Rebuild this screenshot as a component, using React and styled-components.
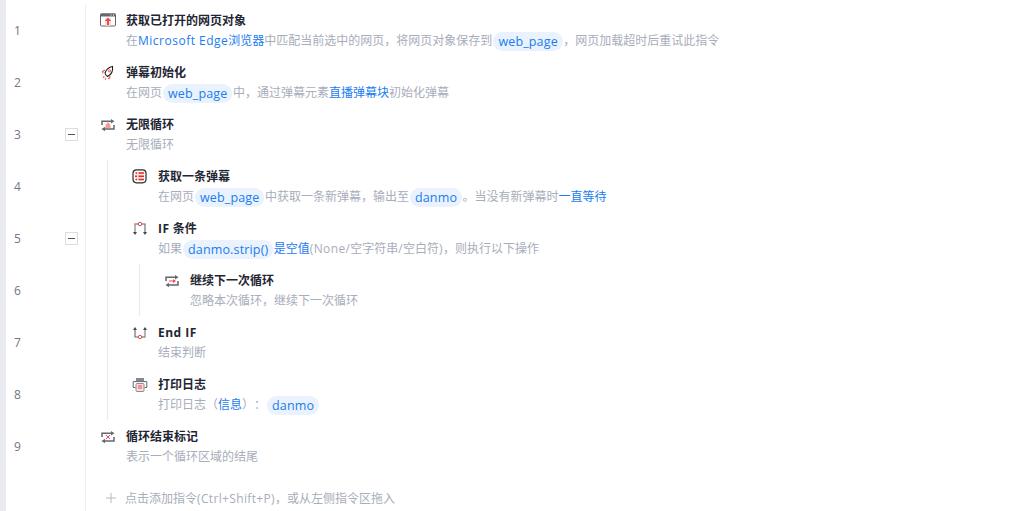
import React from 'react';
import styled, { createGlobalStyle } from 'styled-components';

const GlobalStyle = createGlobalStyle`
  html, body {
    margin: 0;
    padding: 0;
    height: 100%;
    overflow: hidden;
    background: #fff;
  }
  #root {
    height: 100%;
  }
`;

const FONT = `'Open Sans', 'Noto Sans CJK SC', sans-serif`;

const Page = styled.div`
  display: flex;
  height: 511px;
  overflow: hidden;
  font-family: ${FONT};
  font-size: 12px;
  text-spacing-trim: space-all;
`;

const Strip = styled.div`
  width: 6px;
  flex: none;
  background: #e9ebf1;
`;

const Gutter = styled.div`
  width: 79px;
  flex: none;
  padding-top: 4px;
  box-sizing: border-box;
`;

const GutterRow = styled.div`
  height: 52px;
  display: flex;
  align-items: center;
  justify-content: space-between;
  padding: 0 7px 0 8px;
  color: #73777f;
`;

const Toggle = styled.span`
  width: 13px;
  height: 13px;
  box-sizing: border-box;
  border: 1px solid #dcdcdc;
  display: flex;
  align-items: center;
  justify-content: center;
  &::before {
    content: '';
    width: 7px;
    height: 1px;
    background: #555;
  }
`;

const Flow = styled.div`
  flex: 1;
  margin-top: 4px;
  border-left: 1px solid #eeeff2;
`;

const Block = styled.div`
  margin-left: 21px;
  border-left: 1px solid #e8e9ed;
  padding-left: 10px;
`;

const Row = styled.div`
  height: 52px;
  box-sizing: border-box;
  display: flex;
  gap: 10px;
  padding: 7px 0 0 14px;
`;

const IconBox = styled.span`
  width: 16px;
  height: 20px;
  flex: none;
  display: flex;
  align-items: center;
  justify-content: center;
`;

const Body = styled.div`
  display: flex;
  flex-direction: column;
  white-space: nowrap;
`;

const Title = styled.div`
  height: 20px;
  line-height: 20px;
  font-weight: 700;
  color: #1f2633;
`;

const Desc = styled.div`
  height: 20px;
  line-height: 20px;
  display: flex;
  align-items: center;
  color: #a8adba;
`;

const Latin = styled.span`
  letter-spacing: ${(p) => (p.$tight ? '0.35px' : '0.5px')};
`;

const Link = styled.span`
  color: #1a7cf0;
`;

const Chip = styled.span`
  height: 19px;
  line-height: 19px;
  padding: 0 5px;
  margin: 0 0.5px 0 1px;
  border-radius: 10px;
  background: #e9f2fd;
  color: #1a7cf0;
  font-size: 12.5px;
  letter-spacing: 0.15px;
`;

const Footer = styled.div`
  display: flex;
  align-items: center;
  gap: 9px;
  padding: 16px 0 0 20px;
  height: 20px;
  color: #a8adba;
`;

const Svg = ({ children }) => (
  <svg width="16" height="16" viewBox="0 0 16 16" fill="none">
    {children}
  </svg>
);

const GRAY = '#63666d';
const RED = '#ee4b4b';
const PINK = '#fbdcdc';

const WindowIcon = () => (
  <Svg>
    <rect x="0.5" y="1" width="15" height="12" rx="1" stroke={GRAY} />
    <rect x="0.5" y="0.5" width="15" height="3" fill={GRAY} />
    <path d="M10.5 2h1M13 2h1" stroke="#fff" />
    <rect x="5" y="5" width="6" height="7.5" fill={PINK} />
    <path d="M8 4.5 4.8 8H7v4h2V8h2.2z" fill={RED} />
  </Svg>
);

const RocketIcon = () => (
  <Svg>
    <path d="M12.5 1.5C9 2.2 6.2 4.6 5 8c.3 1.5 1.2 2.8 2.5 3.5 3.4-1.6 5.6-5.4 5-10z" stroke="#1f1f1f" strokeWidth="1.1" />
    <circle cx="9.5" cy="5.8" r="1.1" stroke={RED} />
    <path d="M4.8 5 2.5 6.5l.5 1.8M10 11l-.3 2-1.7.7" stroke={RED} strokeWidth="1.1" />
    <path d="M3 12.5l1.5-1M5 14.5l1-1" stroke={RED} strokeWidth="1.2" />
  </Svg>
);

const LoopIcon = ({ children }) => (
  <Svg>
    <path d="M2 8V4.2h9.5" stroke={GRAY} strokeWidth="1.5" />
    <path d="M11 2 14.5 4.2 11 6.5z" fill={GRAY} />
    <path d="M14 8v4h-9.5" stroke={GRAY} strokeWidth="1.5" />
    <path d="M5 9.8 1.5 12 5 14.2z" fill={GRAY} />
    {children}
  </Svg>
);

const ListIcon = () => (
  <Svg>
    <rect x="1" y="0.8" width="13" height="13" rx="3.5" stroke="#2b2b2b" strokeWidth="1.2" />
    <rect x="3.5" y="3" width="8" height="8.5" rx="1" fill={PINK} />
    <path d="M6.5 4h5.5M6.5 7.2h5.5M6.5 10.4h5.5" stroke="#d92f23" strokeWidth="1.5" />
    <path d="M3.5 4h1.5M3.5 10.4h1.5M3 7.2h2" stroke="#d92f23" strokeWidth="1.5" />
  </Svg>
);

const IfIcon = () => (
  <Svg>
    <path d="M3 12V3h3" stroke="#8b8e94" strokeWidth="1.3" />
    <path d="M10 3h3v9" stroke={GRAY} strokeWidth="1.1" />
    <path d="M1 11h4l-2 3zM11 11h4l-2 3z" fill="#44474d" />
    <circle cx="8" cy="3" r="1.7" stroke={RED} />
  </Svg>
);

const EndIfIcon = () => (
  <Svg>
    <path d="M3 4v8h3" stroke={GRAY} strokeWidth="1.1" />
    <path d="M13 4v8h-3" stroke="#8b8e94" strokeWidth="1.3" />
    <path d="M1 5h4L3 2zM11 5h4l-2-3z" fill="#44474d" />
    <circle cx="8" cy="12" r="1.7" stroke={RED} />
  </Svg>
);

const PrintIcon = () => (
  <Svg>
    <path d="M4 1h8v3H4z" fill="#85888e" />
    <path d="M3.5 10.5H1.2V4.6h13.6v5.9h-2.3" stroke={GRAY} />
    <rect x="4" y="6.5" width="8" height="8" rx="1" fill={PINK} stroke="#8b8e94" />
    <path d="M6 9h4M6 11h4" stroke={RED} />
  </Svg>
);

const PlusIcon = () => (
  <svg width="10" height="10" viewBox="0 0 10 10" fill="none">
    <path d="M5 0v10M0 5h10" stroke="#b4b8c2" />
  </svg>
);

const Step = ({ icon, title, children }) => (
  <Row>
    <IconBox>{icon}</IconBox>
    <Body>
      <Title>{title}</Title>
      <Desc>{children}</Desc>
    </Body>
  </Row>
);

const LINES = [1, 2, 3, 4, 5, 6, 7, 8, 9];
const FOLDABLE = [3, 5];

export default function App() {
  return (
    <>
      <GlobalStyle />
      <Page>
        <Strip />
        <Gutter>
          {LINES.map((n) => (
            <GutterRow key={n}>
              <span>{n}</span>
              {FOLDABLE.includes(n) && <Toggle />}
            </GutterRow>
          ))}
        </Gutter>
        <Flow>
          <Step icon={<WindowIcon />} title="获取已打开的网页对象">
            在<Link><Latin>Microsoft Edge</Latin>浏览器</Link>中匹配当前选中的网页，将网页对象保存到<Chip>web_page</Chip>，网页加载超时后重试此指令
          </Step>
          <Step icon={<RocketIcon />} title="弹幕初始化">
            在网页<Chip>web_page</Chip>中，通过弹幕元素<Link>直播弹幕块</Link>初始化弹幕
          </Step>
          <Step
            icon={
              <LoopIcon>
                <path d="M8 5 5.5 8v3h5V8z" fill="#f59a94" />
              </LoopIcon>
            }
            title="无限循环"
          >
            无限循环
          </Step>
          <Block>
            <Step icon={<ListIcon />} title="获取一条弹幕">
              在网页<Chip>web_page</Chip>中获取一条新弹幕，输出至<Chip>danmo</Chip>。当没有新弹幕时<Link>一直等待</Link>
            </Step>
            <Step icon={<IfIcon />} title={<><Latin>IF</Latin> 条件</>}>
              如果<Chip>danmo.strip()</Chip><Link>是空值</Link><Latin $tight>(None/</Latin>空字符串<Latin $tight>/</Latin>空白符<Latin $tight>)</Latin>，则执行以下操作
            </Step>
            <Block>
              <Step
                icon={
                  <LoopIcon>
                    <path d="M5 8h5" stroke={RED} />
                    <path d="M9 6l3 2-3 2z" fill={RED} />
                  </LoopIcon>
                }
                title="继续下一次循环"
              >
                忽略本次循环，继续下一次循环
              </Step>
            </Block>
            <Step icon={<EndIfIcon />} title={<Latin>End IF</Latin>}>
              结束判断
            </Step>
            <Step icon={<PrintIcon />} title="打印日志">
              打印日志（<Link>信息</Link>）：<Chip>danmo</Chip>
            </Step>
          </Block>
          <Step
            icon={
              <LoopIcon>
                <path d="M6 6l4 4M10 6l-4 4" stroke={RED} />
              </LoopIcon>
            }
            title="循环结束标记"
          >
            表示一个循环区域的结尾
          </Step>
          <Footer>
            <PlusIcon />
            <span>点击添加指令<Latin $tight>(Ctrl+Shift+P)</Latin>，或从左侧指令区拖入</span>
          </Footer>
        </Flow>
      </Page>
    </>
  );
}
